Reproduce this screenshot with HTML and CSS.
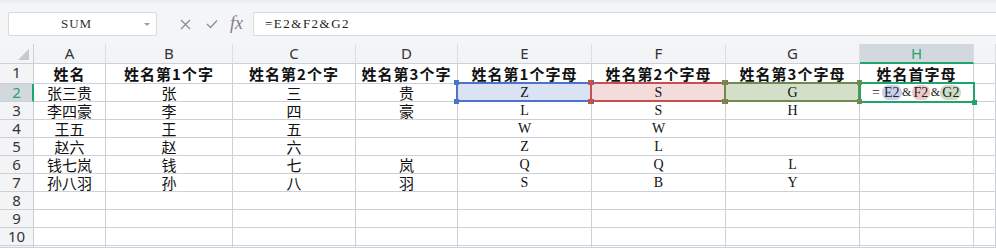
FILE: index.html
```html
<!DOCTYPE html>
<html lang="zh-CN">
<head>
<meta charset="utf-8">
<title>Sheet</title>
<link rel="stylesheet" href="styles.css">
</head>
<body>
<div class="toolbar">
  <div class="namebox"><span class="name-text">SUM</span><span class="caret"></span></div>
  <div class="fbtns">
    <svg class="ico ico-x" width="11" height="11" viewBox="0 0 11 11"><path d="M1 1 L10 10 M10 1 L1 10" stroke="#8a8d93" stroke-width="1.3" fill="none"/></svg>
    <svg class="ico ico-ok" width="12" height="10" viewBox="0 0 12 10"><path d="M1 5 L4.5 8.5 L11 1.5" stroke="#8a8d93" stroke-width="1.3" fill="none"/></svg>
    <span class="fx">fx</span>
  </div>
  <div class="finput">=E2&amp;F2&amp;G2</div>
</div>
<div class="sheet">
  <div class="corner"><svg width="11" height="11" viewBox="0 0 11 11"><polygon points="11,0 11,11 0,11" fill="#c6c8cd"/></svg></div>
  <div class="ch">A</div><div class="ch">B</div><div class="ch">C</div><div class="ch">D</div><div class="ch">E</div><div class="ch">F</div><div class="ch">G</div><div class="ch ch-sel">H</div><div class="ch"></div>

  <div class="rh">1</div>
  <div class="c b">姓名</div><div class="c b">姓名第1个字</div><div class="c b">姓名第2个字</div><div class="c b">姓名第3个字</div><div class="c b">姓名第1个字母</div><div class="c b">姓名第2个字母</div><div class="c b">姓名第3个字母</div><div class="c b">姓名首字母</div><div class="c"></div>

  <div class="rh rh-sel">2</div>
  <div class="c">张三贵</div><div class="c">张</div><div class="c">三</div><div class="c">贵</div>
  <div class="c m ref ref-e">Z<span class="sel sel-e"></span><i class="sq sq-e tl"></i><i class="sq sq-e tr"></i><i class="sq sq-e bl"></i><i class="sq sq-e br"></i></div>
  <div class="c m ref ref-f">S<span class="sel sel-f"></span><i class="sq sq-f tl"></i><i class="sq sq-f tr"></i><i class="sq sq-f bl"></i><i class="sq sq-f br"></i></div>
  <div class="c m ref ref-g">G<span class="sel sel-g"></span><i class="sq sq-g tl"></i><i class="sq sq-g tr"></i><i class="sq sq-g bl"></i><i class="sq sq-g br"></i></div>
  <div class="c m edit"><span class="eq">=</span><span class="pill pill-e">E2</span><span class="amp">&amp;</span><span class="pill pill-f">F2</span><span class="amp">&amp;</span><span class="pill pill-g">G2</span><span class="sel sel-h"></span><i class="sq sq-h br"></i></div>
  <div class="c"></div>

  <div class="rh">3</div>
  <div class="c">李四豪</div><div class="c">李</div><div class="c">四</div><div class="c">豪</div><div class="c m">L</div><div class="c m">S</div><div class="c m">H</div><div class="c"></div><div class="c"></div>

  <div class="rh">4</div>
  <div class="c">王五</div><div class="c">王</div><div class="c">五</div><div class="c"></div><div class="c m">W</div><div class="c m">W</div><div class="c"></div><div class="c"></div><div class="c"></div>

  <div class="rh">5</div>
  <div class="c">赵六</div><div class="c">赵</div><div class="c">六</div><div class="c"></div><div class="c m">Z</div><div class="c m">L</div><div class="c"></div><div class="c"></div><div class="c"></div>

  <div class="rh">6</div>
  <div class="c">钱七岚</div><div class="c">钱</div><div class="c">七</div><div class="c">岚</div><div class="c m">Q</div><div class="c m">Q</div><div class="c m">L</div><div class="c"></div><div class="c"></div>

  <div class="rh">7</div>
  <div class="c">孙八羽</div><div class="c">孙</div><div class="c">八</div><div class="c">羽</div><div class="c m">S</div><div class="c m">B</div><div class="c m">Y</div><div class="c"></div><div class="c"></div>

  <div class="rh">8</div>
  <div class="c"></div><div class="c"></div><div class="c"></div><div class="c"></div><div class="c"></div><div class="c"></div><div class="c"></div><div class="c"></div><div class="c"></div>
  <div class="rh">9</div>
  <div class="c"></div><div class="c"></div><div class="c"></div><div class="c"></div><div class="c"></div><div class="c"></div><div class="c"></div><div class="c"></div><div class="c"></div>
  <div class="rh">10</div>
  <div class="c"></div><div class="c"></div><div class="c"></div><div class="c"></div><div class="c"></div><div class="c"></div><div class="c"></div><div class="c"></div><div class="c"></div>
  <div class="rh"></div>
  <div class="c"></div><div class="c"></div><div class="c"></div><div class="c"></div><div class="c"></div><div class="c"></div><div class="c"></div><div class="c"></div><div class="c"></div>
</div>
</body>
</html>
```
FILE: styles.css
```css
html, body {
  margin: 0;
  padding: 0;
  background: #ffffff;
  overflow: hidden;
}
body {
  width: 996px;
  height: 248px;
  font-family: "Noto Sans CJK SC", "Noto Sans", sans-serif;
}
.toolbar {
  height: 44px;
  box-sizing: border-box;
  padding: 12px 0 0 8px;
  display: flex;
  align-items: flex-start;
  background: linear-gradient(#e9eaed 0px, #f4f5f7 4px, #f4f5f7 100%);
}
.namebox {
  width: 149px;
  height: 24px;
  box-sizing: border-box;
  border: 1px solid #d9dbdf;
  border-radius: 2px;
  background: #fff;
  position: relative;
  display: flex;
  align-items: center;
  justify-content: center;
}
.name-text {
  font-family: "Liberation Serif", serif;
  font-size: 13px;
  letter-spacing: 1px;
  color: #333;
  margin-left: -12px;
}
.caret {
  position: absolute;
  right: 6px;
  top: 10px;
  width: 0;
  height: 0;
  border-left: 3px solid transparent;
  border-right: 3px solid transparent;
  border-top: 3px solid #9a9da3;
}
.fbtns {
  display: flex;
  align-items: center;
  height: 24px;
  margin-left: 23px;
  width: 73px;
}
.ico-x { margin-right: 15px; }
.ico-ok { margin-right: 12px; }
.fx {
  font-family: "Liberation Serif", serif;
  font-style: italic;
  font-size: 18px;
  color: #7d8086;
  line-height: 20px;
  margin-top: -3px;
}
.finput {
  flex: 1;
  height: 24px;
  box-sizing: border-box;
  border: 1px solid #d9dbdf;
  border-right: none;
  border-radius: 2px 0 0 2px;
  background: #fff;
  font-family: "Liberation Serif", serif;
  font-size: 13px;
  letter-spacing: 1.5px;
  line-height: 22px;
  color: #222;
  padding-left: 11px;
}
.sheet {
  display: grid;
  grid-template-columns: 34px 72px 127px 123px 102px 134px 134px 134px 114px 1fr;
  grid-template-rows: 20px 20px repeat(9, 18px) 2px;
}
.sheet > div {
  box-sizing: border-box;
  border-right: 1px solid #cdd0d8;
  border-bottom: 1px solid #cdd0d8;
}
.corner {
  background: #f3f4f6;
  display: flex;
  justify-content: flex-end;
  align-items: flex-end;
  padding: 0 4px 3px 0;
}
.corner svg { display: block; }
.sheet > .ch {
  background: #f3f4f6;
  border-right-color: #dcdee3;
  font-family: "Noto Sans", sans-serif;
  font-size: 15px;
  line-height: 19px;
  color: #333;
  text-align: center;
}
.sheet > .ch-sel {
  background: #d3d7de;
  color: #1fa469;
  border-bottom: 2px solid #1fa469;
}
.sheet > .rh {
  background: #f3f4f6;
  font-family: "Noto Sans", sans-serif;
  font-size: 15px;
  line-height: 17px;
  color: #333;
  text-align: center;
}
.sheet > .rh-sel {
  background: #d3d7de;
  color: #1fa469;
  border-right: 2px solid #1fa469;
  padding-left: 1px;
}
.c {
  position: relative;
  font-size: 15px;
  line-height: 17px;
  color: #111;
  text-align: center;
  white-space: nowrap;
}
.c.b {
  font-weight: bold;
  letter-spacing: 1px;
  line-height: 19px;
}
.c.m {
  font-family: "Liberation Serif", serif;
  font-size: 14px;
}
.ref-e { background: #dbe2f4; }
.ref-f { background: #f5dcdc; }
.ref-g { background: #d4dfca; }
.sel {
  position: absolute;
  top: -2px;
  left: -2px;
  right: -1px;
  bottom: -1px;
  border: 2px solid;
  box-sizing: border-box;
}
.sel-e { border-color: #4a74c9; }
.sel-f { border-color: #c5514e; }
.sel-g { border-color: #6f8c50; }
.sel-h { border-color: #1fa469; left: -1px; right: -2px; bottom: -2px; }
.sq {
  position: absolute;
  width: 5px;
  height: 5px;
  z-index: 2;
}
.sq.tl { left: -4px; top: -4px; }
.sq.tr { right: -3px; top: -4px; }
.sq.bl { left: -4px; bottom: -3px; }
.sq.br { right: -3px; bottom: -3px; }
.sq-h.br { right: -4px; bottom: -4px; }
.sq-e { background: #4a74c9; }
.sq-f { background: #c5514e; }
.sq-g { background: #6f8c50; }
.sq-h { background: #1fa469; }
.edit {
  text-align: left;
  padding-left: 12px;
  display: flex;
  align-items: center;
  color: #222;
}
.eq { width: 10px; }
.pill {
  display: inline-block;
  height: 15px;
  line-height: 15px;
  padding: 0 2px;
  border-radius: 7px;
}
.pill-e { background: #c8d2f0; }
.pill-f { background: #efcaca; }
.pill-g { background: #cfdcc5; }
.amp { width: 10px; text-align: center; font-size: 12px; }
```
